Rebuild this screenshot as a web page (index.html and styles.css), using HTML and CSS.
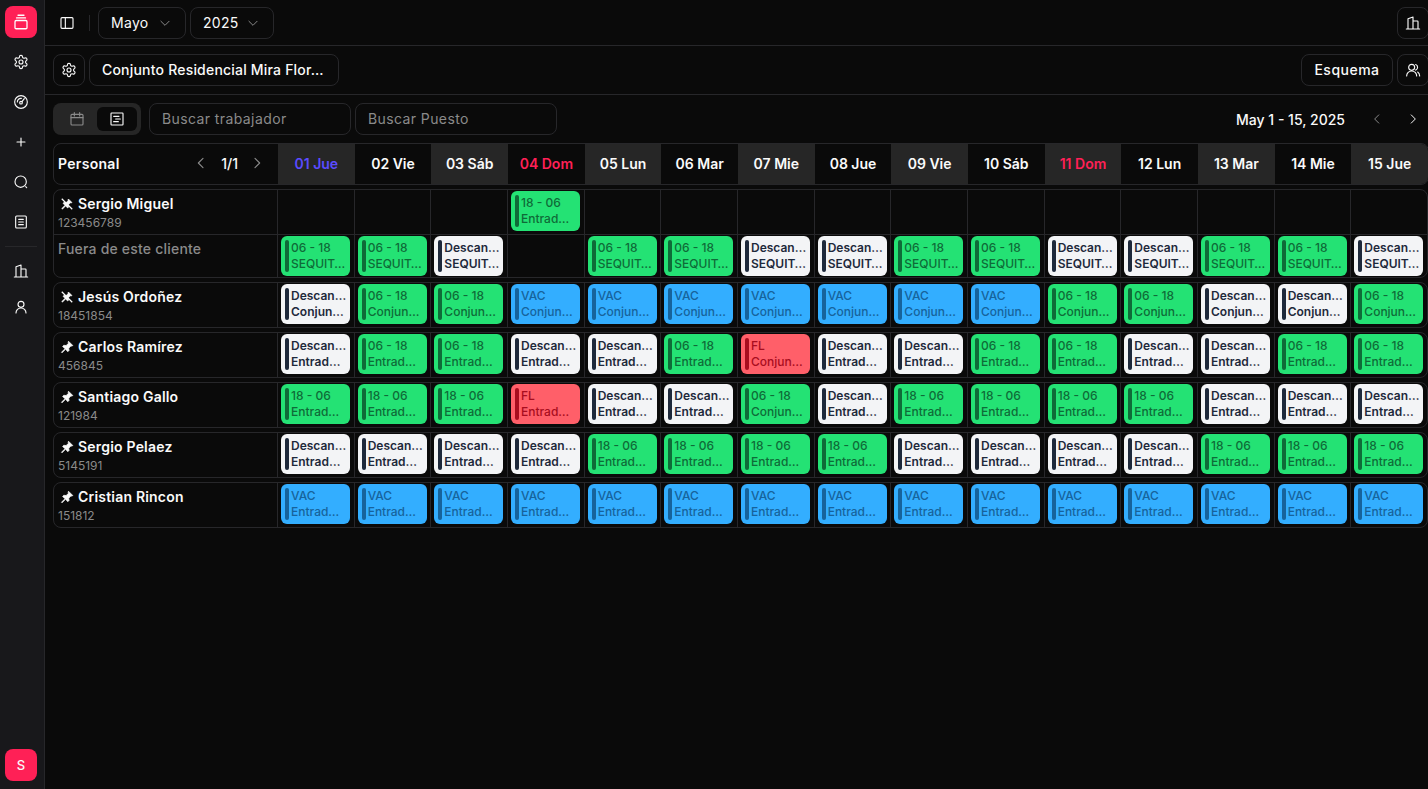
FILE: index.html
```html
<!DOCTYPE html>
<html lang="es">
  <head>
    <meta charset="UTF-8" />
    <title>Turnos</title>
    <link rel="stylesheet" href="styles.css">
  </head>
  <body>
    <svg class="sprites" aria-hidden="true">
      <symbol id="i-gear" viewBox="0 0 24 24"><path d="M12.22 2h-.44a2 2 0 0 0-2 2v.18a2 2 0 0 1-1 1.73l-.43.25a2 2 0 0 1-2 0l-.15-.08a2 2 0 0 0-2.73.73l-.22.38a2 2 0 0 0 .73 2.73l.15.1a2 2 0 0 1 1 1.72v.51a2 2 0 0 1-1 1.74l-.15.09a2 2 0 0 0-.73 2.73l.22.38a2 2 0 0 0 2.73.73l.15-.08a2 2 0 0 1 2 0l.43.25a2 2 0 0 1 1 1.73V20a2 2 0 0 0 2 2h.44a2 2 0 0 0 2-2v-.18a2 2 0 0 1 1-1.73l.43-.25a2 2 0 0 1 2 0l.15.08a2 2 0 0 0 2.73-.73l.22-.39a2 2 0 0 0-.73-2.73l-.15-.08a2 2 0 0 1-1-1.74v-.5a2 2 0 0 1 1-1.74l.15-.09a2 2 0 0 0 .73-2.73l-.22-.38a2 2 0 0 0-2.73-.73l-.15.08a2 2 0 0 1-2 0l-.43-.25a2 2 0 0 1-1-1.73V4a2 2 0 0 0-2-2z"/><circle cx="12" cy="12" r="3"/></symbol>
      <symbol id="i-building" viewBox="0 0 24 24"><path d="M2 21h20M4.5 21V5.5L12 3v18M12 9h6.5a1 1 0 0 1 1 1v11"/></symbol>
      <symbol id="i-prev" viewBox="0 0 24 24"><path d="M15 5l-7 7 7 7"/></symbol>
      <symbol id="i-next" viewBox="0 0 24 24"><path d="M9 5l7 7-7 7"/></symbol>
      <symbol id="i-down" viewBox="0 0 24 24"><path d="M5 9l7 7 7-7"/></symbol>
      <symbol id="i-pin" viewBox="0 0 24 24"><path d="M14.5 2l7.5 7.5-2 1-1-.5-4 4 .5 4-2 2-4-4-6 6-1-1 6-6-4-4 2-2 4 .5 4-4-.5-1z"/></symbol>
      <symbol id="i-unpin" viewBox="0 0 24 24"><path d="M14.5 3.5l6 6-1.6.8-1-.5-3.5 3.6.5 3.6-1.8 1.8-3.5-3.5-5.5 5.5-1-1 5.5-5.5-3.5-3.5 1.8-1.8 3.6.5 3.6-3.5-.5-1z"/><path class="slash" d="M3 3l18 18"/></symbol>
    </svg>

    <div class="app">
      <nav class="sidebar">
        <div class="logo">
          <svg class="ic" viewBox="0 0 24 24"><rect x="4" y="10" width="16" height="11" rx="1.5"/><path d="M6 6.5h12M8 3h8"/></svg>
        </div>
        <div class="side-item"><svg class="ic"><use href="#i-gear"/></svg></div>
        <div class="side-item">
          <svg class="ic" viewBox="0 0 24 24"><circle cx="12" cy="12" r="9.5"/><circle cx="12" cy="13" r="2"/><path d="M13.5 11.5L17 7M6.5 12a5.5 5.5 0 0 1 6-5.5"/></svg>
        </div>
        <div class="side-item">
          <svg class="ic" viewBox="0 0 24 24"><path d="M12 6v12M6 12h12"/></svg>
        </div>
        <div class="side-item">
          <svg class="ic" viewBox="0 0 24 24"><circle cx="11.5" cy="11.5" r="8.5"/><path d="M19 19l1.5 1.5" /></svg>
        </div>
        <div class="side-item">
          <svg class="ic" viewBox="0 0 24 24"><rect x="4" y="3" width="16" height="18" rx="1.5"/><path d="M8.5 8h7M8.5 12h7M8.5 16h7"/></svg>
        </div>
        <div class="side-sep"></div>
        <div class="side-item short"><svg class="ic"><use href="#i-building"/></svg></div>
        <div class="side-item short">
          <svg class="ic" viewBox="0 0 24 24"><circle cx="12" cy="8" r="4.5"/><path d="M4.5 21a7.5 7.5 0 0 1 15 0"/></svg>
        </div>
        <div class="avatar">S</div>
      </nav>

      <main class="main">
        <header class="bar top-bar">
          <svg class="ic panel-icon" viewBox="0 0 24 24"><rect x="3" y="4" width="18" height="16" rx="1.5"/><path d="M9.5 4v16"/></svg>
          <span class="vsep"></span>
          <div class="btn select month">Mayo <svg class="ic small dim"><use href="#i-down"/></svg></div>
          <div class="btn select year">2025 <svg class="ic small dim"><use href="#i-down"/></svg></div>
          <div class="btn square push"><svg class="ic"><use href="#i-building"/></svg></div>
        </header>

        <div class="bar sub-bar">
          <div class="btn square"><svg class="ic"><use href="#i-gear"/></svg></div>
          <div class="btn client">Conjunto Residencial Mira Flor…</div>
          <div class="btn scheme push">Esquema</div>
          <div class="btn square">
            <svg class="ic" viewBox="0 0 24 24"><circle cx="10" cy="8" r="4.5"/><path d="M2.5 21a7.5 7.5 0 0 1 15 0M16 3.8a4.5 4.5 0 0 1 0 8.4M19 15a7.5 7.5 0 0 1 3 6"/></svg>
          </div>
        </div>

        <section class="content">
          <div class="filters">
            <div class="view-tabs">
              <span class="tab">
                <svg class="ic dim" viewBox="0 0 24 24"><rect x="3" y="5" width="18" height="16" rx="1.5"/><path d="M3 10h18M8 2.5v5M16 2.5v5"/></svg>
              </span>
              <span class="tab active">
                <svg class="ic" viewBox="0 0 24 24"><rect x="3" y="3" width="18" height="18" rx="1"/><path d="M7 8h8M10 12h7M7 16h7"/></svg>
              </span>
            </div>
            <div class="search">Buscar trabajador</div>
            <div class="search">Buscar Puesto</div>
            <div class="range">May 1 - 15, 2025</div>
            <svg class="ic small dim range-prev"><use href="#i-prev"/></svg>
            <svg class="ic small range-next"><use href="#i-next"/></svg>
          </div>

          <div class="row head">
            <div class="head-name">
              <b>Personal</b>
              <svg class="ic dim"><use href="#i-prev"/></svg>
              <span class="pager">1/1</span>
              <svg class="ic dim pager-next"><use href="#i-next"/></svg>
            </div>
            <div class="day alt today">01 Jue</div>
            <div class="day">02 Vie</div>
            <div class="day alt">03 Sáb</div>
            <div class="day sunday">04 Dom</div>
            <div class="day alt">05 Lun</div>
            <div class="day">06 Mar</div>
            <div class="day alt">07 Mie</div>
            <div class="day">08 Jue</div>
            <div class="day alt">09 Vie</div>
            <div class="day">10 Sáb</div>
            <div class="day alt sunday">11 Dom</div>
            <div class="day">12 Lun</div>
            <div class="day alt">13 Mar</div>
            <div class="day">14 Mie</div>
            <div class="day alt">15 Jue</div>
          </div>

          <div class="person">
            <div class="row">
              <div class="name-cell">
                <div class="name"><svg class="pin"><use href="#i-unpin"/></svg>Sergio Miguel</div>
                <div class="doc">123456789</div>
              </div>
              <div class="cell"></div><div class="cell"></div><div class="cell"></div>
              <div class="cell"><div class="shift green"><p>18 - 06</p><p>Entrad…</p></div></div>
              <div class="cell"></div><div class="cell"></div><div class="cell"></div><div class="cell"></div>
              <div class="cell"></div><div class="cell"></div><div class="cell"></div><div class="cell"></div>
              <div class="cell"></div><div class="cell"></div><div class="cell"></div>
            </div>
            <div class="row second">
              <div class="name-cell outside">Fuera de este cliente</div>
              <div class="cell"><div class="shift green"><p>06 - 18</p><p>SEQUIT…</p></div></div>
              <div class="cell"><div class="shift green"><p>06 - 18</p><p>SEQUIT…</p></div></div>
              <div class="cell"><div class="shift white"><p>Descan…</p><p>SEQUIT…</p></div></div>
              <div class="cell"></div>
              <div class="cell"><div class="shift green"><p>06 - 18</p><p>SEQUIT…</p></div></div>
              <div class="cell"><div class="shift green"><p>06 - 18</p><p>SEQUIT…</p></div></div>
              <div class="cell"><div class="shift white"><p>Descan…</p><p>SEQUIT…</p></div></div>
              <div class="cell"><div class="shift white"><p>Descan…</p><p>SEQUIT…</p></div></div>
              <div class="cell"><div class="shift green"><p>06 - 18</p><p>SEQUIT…</p></div></div>
              <div class="cell"><div class="shift green"><p>06 - 18</p><p>SEQUIT…</p></div></div>
              <div class="cell"><div class="shift white"><p>Descan…</p><p>SEQUIT…</p></div></div>
              <div class="cell"><div class="shift white"><p>Descan…</p><p>SEQUIT…</p></div></div>
              <div class="cell"><div class="shift green"><p>06 - 18</p><p>SEQUIT…</p></div></div>
              <div class="cell"><div class="shift green"><p>06 - 18</p><p>SEQUIT…</p></div></div>
              <div class="cell"><div class="shift white"><p>Descan…</p><p>SEQUIT…</p></div></div>
            </div>
          </div>

          <div class="person">
            <div class="row">
              <div class="name-cell">
                <div class="name"><svg class="pin"><use href="#i-unpin"/></svg>Jesús Ordoñez</div>
                <div class="doc">18451854</div>
              </div>
              <div class="cell"><div class="shift white"><p>Descan…</p><p>Conjun…</p></div></div>
              <div class="cell"><div class="shift green"><p>06 - 18</p><p>Conjun…</p></div></div>
              <div class="cell"><div class="shift green"><p>06 - 18</p><p>Conjun…</p></div></div>
              <div class="cell"><div class="shift blue"><p>VAC</p><p>Conjun…</p></div></div>
              <div class="cell"><div class="shift blue"><p>VAC</p><p>Conjun…</p></div></div>
              <div class="cell"><div class="shift blue"><p>VAC</p><p>Conjun…</p></div></div>
              <div class="cell"><div class="shift blue"><p>VAC</p><p>Conjun…</p></div></div>
              <div class="cell"><div class="shift blue"><p>VAC</p><p>Conjun…</p></div></div>
              <div class="cell"><div class="shift blue"><p>VAC</p><p>Conjun…</p></div></div>
              <div class="cell"><div class="shift blue"><p>VAC</p><p>Conjun…</p></div></div>
              <div class="cell"><div class="shift green"><p>06 - 18</p><p>Conjun…</p></div></div>
              <div class="cell"><div class="shift green"><p>06 - 18</p><p>Conjun…</p></div></div>
              <div class="cell"><div class="shift white"><p>Descan…</p><p>Conjun…</p></div></div>
              <div class="cell"><div class="shift white"><p>Descan…</p><p>Conjun…</p></div></div>
              <div class="cell"><div class="shift green"><p>06 - 18</p><p>Conjun…</p></div></div>
            </div>
          </div>

          <div class="person">
            <div class="row">
              <div class="name-cell">
                <div class="name"><svg class="pin"><use href="#i-pin"/></svg>Carlos Ramírez</div>
                <div class="doc">456845</div>
              </div>
              <div class="cell"><div class="shift white"><p>Descan…</p><p>Entrad…</p></div></div>
              <div class="cell"><div class="shift green"><p>06 - 18</p><p>Entrad…</p></div></div>
              <div class="cell"><div class="shift green"><p>06 - 18</p><p>Entrad…</p></div></div>
              <div class="cell"><div class="shift white"><p>Descan…</p><p>Entrad…</p></div></div>
              <div class="cell"><div class="shift white"><p>Descan…</p><p>Entrad…</p></div></div>
              <div class="cell"><div class="shift green"><p>06 - 18</p><p>Entrad…</p></div></div>
              <div class="cell"><div class="shift red"><p>FL</p><p>Conjun…</p></div></div>
              <div class="cell"><div class="shift white"><p>Descan…</p><p>Entrad…</p></div></div>
              <div class="cell"><div class="shift white"><p>Descan…</p><p>Entrad…</p></div></div>
              <div class="cell"><div class="shift green"><p>06 - 18</p><p>Entrad…</p></div></div>
              <div class="cell"><div class="shift green"><p>06 - 18</p><p>Entrad…</p></div></div>
              <div class="cell"><div class="shift white"><p>Descan…</p><p>Entrad…</p></div></div>
              <div class="cell"><div class="shift white"><p>Descan…</p><p>Entrad…</p></div></div>
              <div class="cell"><div class="shift green"><p>06 - 18</p><p>Entrad…</p></div></div>
              <div class="cell"><div class="shift green"><p>06 - 18</p><p>Entrad…</p></div></div>
            </div>
          </div>

          <div class="person">
            <div class="row">
              <div class="name-cell">
                <div class="name"><svg class="pin"><use href="#i-pin"/></svg>Santiago Gallo</div>
                <div class="doc">121984</div>
              </div>
              <div class="cell"><div class="shift green"><p>18 - 06</p><p>Entrad…</p></div></div>
              <div class="cell"><div class="shift green"><p>18 - 06</p><p>Entrad…</p></div></div>
              <div class="cell"><div class="shift green"><p>18 - 06</p><p>Entrad…</p></div></div>
              <div class="cell"><div class="shift red"><p>FL</p><p>Entrad…</p></div></div>
              <div class="cell"><div class="shift white"><p>Descan…</p><p>Entrad…</p></div></div>
              <div class="cell"><div class="shift white"><p>Descan…</p><p>Entrad…</p></div></div>
              <div class="cell"><div class="shift green"><p>06 - 18</p><p>Conjun…</p></div></div>
              <div class="cell"><div class="shift white"><p>Descan…</p><p>Entrad…</p></div></div>
              <div class="cell"><div class="shift green"><p>18 - 06</p><p>Entrad…</p></div></div>
              <div class="cell"><div class="shift green"><p>18 - 06</p><p>Entrad…</p></div></div>
              <div class="cell"><div class="shift green"><p>18 - 06</p><p>Entrad…</p></div></div>
              <div class="cell"><div class="shift green"><p>18 - 06</p><p>Entrad…</p></div></div>
              <div class="cell"><div class="shift white"><p>Descan…</p><p>Entrad…</p></div></div>
              <div class="cell"><div class="shift white"><p>Descan…</p><p>Entrad…</p></div></div>
              <div class="cell"><div class="shift white"><p>Descan…</p><p>Entrad…</p></div></div>
            </div>
          </div>

          <div class="person">
            <div class="row">
              <div class="name-cell">
                <div class="name"><svg class="pin"><use href="#i-pin"/></svg>Sergio Pelaez</div>
                <div class="doc">5145191</div>
              </div>
              <div class="cell"><div class="shift white"><p>Descan…</p><p>Entrad…</p></div></div>
              <div class="cell"><div class="shift white"><p>Descan…</p><p>Entrad…</p></div></div>
              <div class="cell"><div class="shift white"><p>Descan…</p><p>Entrad…</p></div></div>
              <div class="cell"><div class="shift white"><p>Descan…</p><p>Entrad…</p></div></div>
              <div class="cell"><div class="shift green"><p>18 - 06</p><p>Entrad…</p></div></div>
              <div class="cell"><div class="shift green"><p>18 - 06</p><p>Entrad…</p></div></div>
              <div class="cell"><div class="shift green"><p>18 - 06</p><p>Entrad…</p></div></div>
              <div class="cell"><div class="shift green"><p>18 - 06</p><p>Entrad…</p></div></div>
              <div class="cell"><div class="shift white"><p>Descan…</p><p>Entrad…</p></div></div>
              <div class="cell"><div class="shift white"><p>Descan…</p><p>Entrad…</p></div></div>
              <div class="cell"><div class="shift white"><p>Descan…</p><p>Entrad…</p></div></div>
              <div class="cell"><div class="shift white"><p>Descan…</p><p>Entrad…</p></div></div>
              <div class="cell"><div class="shift green"><p>18 - 06</p><p>Entrad…</p></div></div>
              <div class="cell"><div class="shift green"><p>18 - 06</p><p>Entrad…</p></div></div>
              <div class="cell"><div class="shift green"><p>18 - 06</p><p>Entrad…</p></div></div>
            </div>
          </div>

          <div class="person">
            <div class="row">
              <div class="name-cell">
                <div class="name"><svg class="pin"><use href="#i-pin"/></svg>Cristian Rincon</div>
                <div class="doc">151812</div>
              </div>
              <div class="cell"><div class="shift blue"><p>VAC</p><p>Entrad…</p></div></div>
              <div class="cell"><div class="shift blue"><p>VAC</p><p>Entrad…</p></div></div>
              <div class="cell"><div class="shift blue"><p>VAC</p><p>Entrad…</p></div></div>
              <div class="cell"><div class="shift blue"><p>VAC</p><p>Entrad…</p></div></div>
              <div class="cell"><div class="shift blue"><p>VAC</p><p>Entrad…</p></div></div>
              <div class="cell"><div class="shift blue"><p>VAC</p><p>Entrad…</p></div></div>
              <div class="cell"><div class="shift blue"><p>VAC</p><p>Entrad…</p></div></div>
              <div class="cell"><div class="shift blue"><p>VAC</p><p>Entrad…</p></div></div>
              <div class="cell"><div class="shift blue"><p>VAC</p><p>Entrad…</p></div></div>
              <div class="cell"><div class="shift blue"><p>VAC</p><p>Entrad…</p></div></div>
              <div class="cell"><div class="shift blue"><p>VAC</p><p>Entrad…</p></div></div>
              <div class="cell"><div class="shift blue"><p>VAC</p><p>Entrad…</p></div></div>
              <div class="cell"><div class="shift blue"><p>VAC</p><p>Entrad…</p></div></div>
              <div class="cell"><div class="shift blue"><p>VAC</p><p>Entrad…</p></div></div>
              <div class="cell"><div class="shift blue"><p>VAC</p><p>Entrad…</p></div></div>
            </div>
          </div>
        </section>
      </main>
    </div>
  </body>
</html>
```

FILE: styles.css
```css
* {
  box-sizing: border-box;
}

html,
body {
  height: 100%;
}

body {
  margin: 0;
  background-color: #0a0a0a;
  color: #fafafa;
  font-family: Inter, "Liberation Sans", sans-serif;
  font-size: 14px;
  overflow: hidden;
}

.sprites {
  display: none;
}

.ic {
  display: block;
  width: 16px;
  height: 16px;
  fill: none;
  stroke: currentColor;
  stroke-width: 1.7;
  stroke-linecap: round;
  stroke-linejoin: round;
  flex-shrink: 0;
}

.ic.small {
  width: 14px;
  height: 14px;
}

.dim {
  color: #8a8a8a;
}

.app {
  display: flex;
  height: 100%;
}

/* sidebar */
.sidebar {
  width: 45px;
  flex-shrink: 0;
  display: flex;
  flex-direction: column;
  align-items: center;
  background-color: #18181b;
  border-right: 1px solid #27272a;
  padding: 6px 2px 8px 0;
}

.logo {
  width: 32px;
  height: 32px;
  margin-bottom: 4px;
  border-radius: 8px;
  background-color: #ff2056;
  display: flex;
  align-items: center;
  justify-content: center;
  color: #fff;
}

.logo .ic {
  width: 18px;
  height: 18px;
}

.side-item {
  height: 40px;
  width: 100%;
  display: flex;
  align-items: center;
  justify-content: center;
}

.side-item.short {
  height: 36px;
}

.side-sep {
  width: 32px;
  height: 1px;
  margin: 4px 0 6px;
  background-color: #27272a;
}

.avatar {
  margin-top: auto;
  width: 32px;
  height: 32px;
  border-radius: 8px;
  background-color: #ff2056;
  display: flex;
  align-items: center;
  justify-content: center;
  font-size: 13px;
  font-weight: 500;
}

/* top bars */
.main {
  flex: 1;
  min-width: 0;
  display: flex;
  flex-direction: column;
}

.bar {
  display: flex;
  align-items: center;
  gap: 4px;
  border-bottom: 1px solid #27272a;
  margin-right: -1px;
}

.top-bar {
  height: 46px;
  padding-left: 14px;
}

.sub-bar {
  height: 49px;
  padding-left: 8px;
}

.vsep {
  width: 1px;
  height: 16px;
  margin: 0 4px 0 10px;
  background-color: #27272a;
}

.btn {
  height: 32px;
  border: 1px solid #27272a;
  border-radius: 8px;
  display: flex;
  align-items: center;
  font-weight: 500;
  white-space: nowrap;
}

.square {
  width: 32px;
  flex-shrink: 0;
  justify-content: center;
}

.select {
  justify-content: space-between;
  padding: 0 13px 0 12px;
  font-weight: 400;
  letter-spacing: 0.3px;
}

.month {
  width: 88px;
}

.year {
  width: 84px;
}

.client {
  width: 250px;
  padding: 0 12px 2px;
  letter-spacing: 0.2px;
}

.scheme {
  width: 92px;
  padding-bottom: 2px;
  justify-content: center;
  letter-spacing: 0.5px;
}

.push {
  margin-left: auto;
}

/* filters */
.content {
  padding: 8px 0 0 8px;
}

.filters {
  display: flex;
  align-items: center;
  height: 32px;
  gap: 4px;
}

.view-tabs {
  width: 88px;
  height: 32px;
  padding: 4px;
  margin-right: 4px;
  display: flex;
  background-color: #262626;
  border-radius: 8px;
}

.tab {
  flex: 1;
  display: flex;
  align-items: center;
  justify-content: center;
  border-radius: 6px;
}

.tab.active {
  background-color: #0a0a0a;
}

.search {
  width: 202px;
  height: 32px;
  padding: 0 12px;
  line-height: 30px;
  color: #8a8a8a;
  border: 1px solid #27272a;
  border-radius: 8px;
  letter-spacing: 0.4px;
}

.range {
  margin-left: auto;
  font-weight: 500;
  margin-right: 21px;
}

.range-next {
  margin: 0 8px 0 18px;
}

/* schedule */
.row {
  display: grid;
  grid-template-columns: 223px repeat(15, 1fr);
}

.head {
  grid-template-columns: 224px repeat(15, 1fr);
  height: 42px;
  margin-top: 8px;
  margin-right: -1px;
  border: 1px solid #27272a;
  border-radius: 8px;
  overflow: hidden;
}

.head-name {
  display: flex;
  align-items: center;
  padding: 0 13px 2px 4px;
}

.head-name b {
  font-weight: 600;
  margin-right: auto;
  letter-spacing: 0.3px;
}

.pager {
  margin: 0 11px 0 12px;
  font-weight: 500;
}

.day {
  display: flex;
  align-items: center;
  justify-content: center;
  padding-bottom: 2px;
  font-weight: 600;
}

.day.alt {
  background-color: #262626;
}

.today {
  color: #5b4bff;
}

.sunday {
  color: #ff2056;
}

.person {
  margin-top: 4px;
  border: 1px solid #27272a;
  border-radius: 8px;
  overflow: hidden;
}

.person .row {
  height: 44px;
}

.person .row.second {
  height: 43px;
  border-top: 1px solid #27272a;
}

.name-cell {
  padding: 5px 4px 0;
}

.name {
  display: flex;
  align-items: center;
  gap: 4px;
  padding-left: 2px;
  font-weight: 600;
  line-height: 18px;
  letter-spacing: 0.2px;
}

.pin {
  width: 14px;
  height: 14px;
  fill: #fafafa;
  stroke: #fafafa;
  stroke-width: 1.2;
  stroke-linejoin: round;
  flex-shrink: 0;
}

.slash {
  stroke-width: 2;
  fill: none;
}

.doc {
  margin-top: 2px;
  font-size: 12px;
  line-height: 16px;
  color: #8a8a8a;
}

.outside {
  color: #8a8a8a;
  font-weight: 500;
  padding-top: 4px;
  line-height: 20px;
  letter-spacing: 0.2px;
}

.cell {
  min-width: 0;
  padding: 1px 3.5px 0 3px;
  border-left: 1px solid #27272a;
}

/* shift pill with its coloured bar */
.shift {
  position: relative;
  height: 40px;
  padding: 4px 2px 4px 10px;
  border-radius: 6px;
  font-size: 12px;
  font-weight: 500;
  line-height: 16px;
}

.shift::before {
  content: "";
  position: absolute;
  left: 4px;
  top: 4px;
  bottom: 4px;
  width: 4px;
  border-radius: 2px;
  background-color: currentColor;
}

.shift p {
  margin: 0;
  white-space: nowrap;
}

.green {
  background-color: #24e274;
  color: #0f6b38;
}

.white {
  background-color: #f3f4f6;
  color: #1e293b;
  font-weight: 600;
}

.blue {
  background-color: #33aeff;
  color: #17639b;
}

.red {
  background-color: #ff5f69;
  color: #a80d1e;
}
```
